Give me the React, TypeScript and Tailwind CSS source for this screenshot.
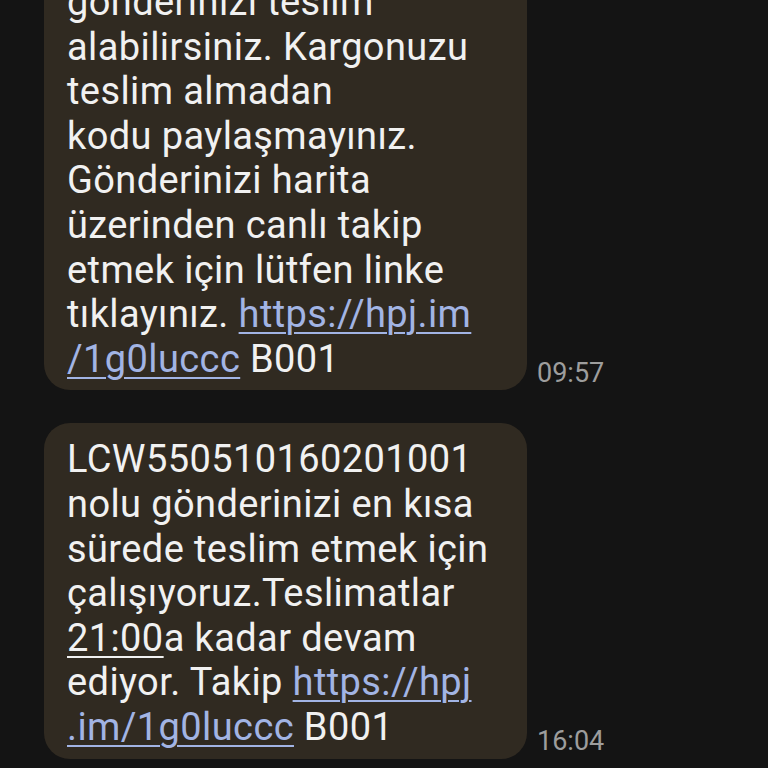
import type { ReactNode } from "react";

function Link({ children }: { children: ReactNode }) {
  return (
    <span className="text-[#a2b4e4] underline decoration-[#a2b4e4] decoration-2 underline-offset-[5px]">
      {children}
    </span>
  );
}

function Bubble({ time, children, className = "" }: { time: string; children: ReactNode; className?: string }) {
  return (
    <div className={`flex items-end ${className}`}>
      <div className="w-[483px] rounded-[26px] bg-[#302a21] pl-[23px] pr-[14px] pt-[14px] pb-[9px] text-[38px] leading-[44.6px] tracking-[0.4px] text-[#f1f1f1]">
        {children}
      </div>
      <span className="mb-[1px] ml-[10px] text-[27px] leading-[31.6px] text-[#9d9d9d]">{time}</span>
    </div>
  );
}

export default function App() {
  return (
    <div className="h-[768px] w-[768px] overflow-hidden bg-[#141414] pl-[44px] font-['Roboto',sans-serif]">
      <Bubble time="09:57" className="-mt-[34px]">
        gönderinizi teslim
        <br />
        alabilirsiniz. Kargonuzu
        <br />
        teslim almadan
        <br />
        kodu paylaşmayınız.
        <br />
        Gönderinizi harita
        <br />
        üzerinden canlı takip
        <br />
        etmek için lütfen linke
        <br />
        tıklayınız. <Link>https://hpj.im</Link>
        <br />
        <Link>/1g0luccc</Link> B001
      </Bubble>

      <Bubble time="16:04" className="mt-[33px]">
        LCW550510160201001
        <br />
        nolu gönderinizi en kısa
        <br />
        sürede teslim etmek için
        <br />
        çalışıyoruz.Teslimatlar
        <br />
        <span className="underline decoration-2 underline-offset-[5px]">21:00</span>a kadar devam
        <br />
        ediyor. Takip <Link>https://hpj</Link>
        <br />
        <Link>.im/1g0luccc</Link> B001
      </Bubble>
    </div>
  );
}
